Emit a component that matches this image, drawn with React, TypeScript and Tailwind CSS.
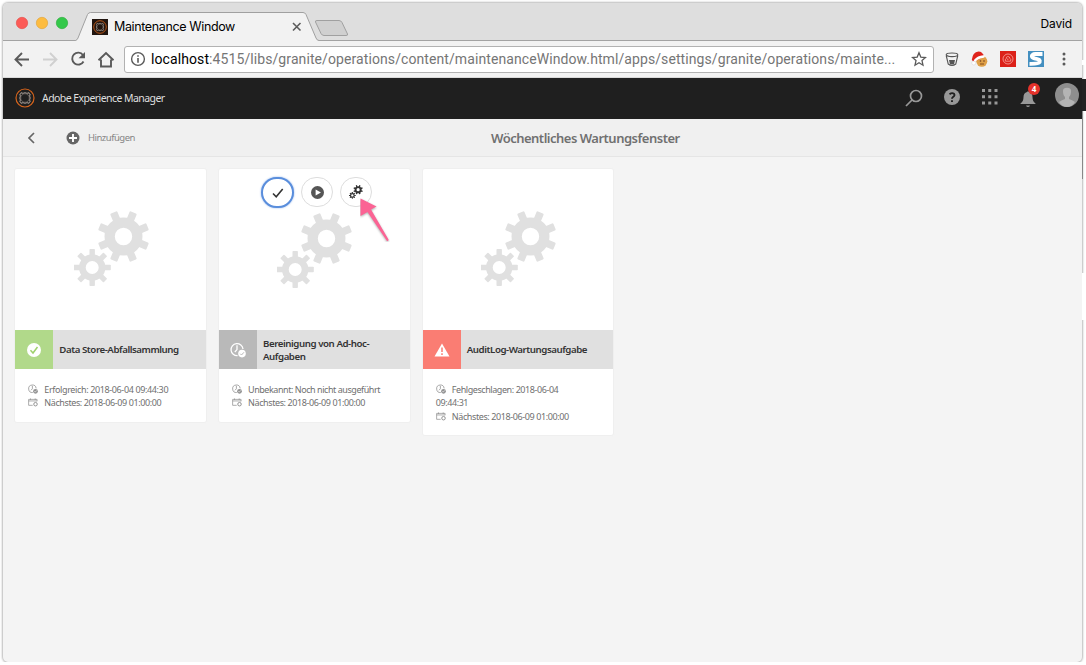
import React from 'react';

const NOTO = "font-['Noto_Sans',sans-serif]";

function gearPath(cx: number, cy: number, outer: number, body: number, hole: number, toothW: number, start: number) {
  const teeth = Array.from({ length: 8 }, (_, i) => start + i * 45);
  return (
    <g>
      {teeth.map((a) => (
        <rect key={a} x={cx - toothW / 2} y={cy - outer} width={toothW} height={outer - body + 3} rx={toothW * 0.15} transform={`rotate(${a} ${cx} ${cy})`} fill="currentColor" />
      ))}
      <circle cx={cx} cy={cy} r={(body + hole) / 2} fill="none" stroke="currentColor" strokeWidth={body - hole} />
    </g>
  );
}

function Gears({ className }: { className: string }) {
  return (
    <svg viewBox="0 0 76 76" className={className}>
      {gearPath(49.5, 25.5, 26, 19, 8.7, 7.6, 22.5)}
      {gearPath(18.2, 56.5, 18.6, 13.2, 6.5, 5.4, 0)}
    </svg>
  );
}

function Emblem({ className }: { className: string }) {
  return (
    <svg viewBox="0 0 20 20" className={className} fill="none">
      <circle cx="10" cy="10" r="9" stroke="#d6641c" strokeWidth="1.2" />
      <path d="M6 4.7Q8 6 10 4.700Q12 6 14 4.700Q13.700 6 15.200 6.200Q14 8 15.200 10Q14 12 15.200 13.800Q14 14 14 15.300Q12 14 10 15.300Q8 14 6 15.300Q6 14 4.800 13.800Q6 12 4.800 10Q6 8 4.800 6.200Q6.200 6 6 4.700Z" stroke="#b5aaa3" strokeWidth=".9" />
      <circle cx="10" cy="10" r="4.3" stroke="#8b817b" strokeWidth=".6" />
    </svg>
  );
}

function ClockIcon({ className }: { className: string }) {
  return (
    <svg viewBox="0 0 16 16" className={className} fill="none" stroke="currentColor">
      <path d="M7.6 13.6A6 6 0 1 1 13 7M7 3.2V7.6L4.8 10" strokeWidth="1.3" />
      <circle cx="12" cy="11.6" r="3.8" fill="currentColor" stroke="none" />
      <path d="m10.2 11.7 1.3 1.3 2.4-2.7" stroke="#fff" strokeWidth="1" />
    </svg>
  );
}

function CalendarIcon() {
  return (
    <svg viewBox="0 0 16 14" className="inline-block h-[9px] w-[10px] text-[#929292]" fill="none" stroke="currentColor" strokeWidth="1.2">
      <path d="M7.5 11.5H1V2H14.5V5M1 4.5H14.5M4 .5V3M11.5 .5V3" />
      <circle cx="12" cy="9.7" r="2.8" strokeWidth="1.6" />
    </svg>
  );
}

function Info({ children, calendar = false, ls = 'tracking-[-0.370px]' }: { children: React.ReactNode; calendar?: boolean; ls?: string }) {
  return (
    <p className={ls}>
      <span className="mr-[6px] inline-flex h-[10px] w-[10px] items-center align-[-1px]">
        {calendar ? <CalendarIcon /> : <ClockIcon className="h-[10px] w-[10px] text-[#929292]" />}
      </span>
      {children}
    </p>
  );
}

function Card({ tint, icon, title, children, actions, height, shift }: {
  tint: string; icon: React.ReactNode; title: React.ReactNode; children: React.ReactNode; actions?: React.ReactNode; height: string; shift: string;
}) {
  return (
    <article className={`relative flex w-[190.500px] shrink-0 flex-col rounded-[2px] bg-white shadow-[0_0_1px_1px_#efefef] ${height}`}>
      <div className={`h-[161px] shrink-0 ${shift}`}>
        <Gears className="h-[76px] w-[76px] text-[#e0e0e0]" />
      </div>
      {actions}
      <div className="flex h-[39px] shrink-0 bg-[#e0e0e0]">
        <div className={`flex w-[38px] shrink-0 items-center justify-center text-white ${tint}`}>{icon}</div>
        <h2 className="flex flex-1 items-center whitespace-nowrap pl-[6px] text-[9.700px] font-semibold leading-[13px] tracking-[-0.440px] text-[#333]">{title}</h2>
      </div>
      <div className="whitespace-nowrap pl-[13px] pt-[13.500px] text-[9px] leading-[13.500px] text-[#707070]">{children}</div>
    </article>
  );
}

function BrowserTop() {
  return (
    <div className="relative h-[38px] shrink-0 border-b border-[#a3a3a3] bg-[#dedede]">
      <svg className="absolute left-0 top-0 h-[38px] w-[360px]" viewBox="0 0 360 38">
        <circle cx="19" cy="20" r="5.7" fill="#fc5b57" stroke="#e24842" strokeWidth=".6" />
        <circle cx="39" cy="20" r="5.7" fill="#fdbc40" stroke="#dfa033" strokeWidth=".6" />
        <circle cx="59" cy="20" r="5.7" fill="#34c84a" stroke="#27aa35" strokeWidth=".6" />
        <path d="M72.5 38L73 37.3Q74.300 37 75 35L84.500 11.500Q85.500 9.500 87.500 9.500H300Q302 9.500 303 11.500L313 35Q314 37.500 316 37.500V38Z" fill="#f2f2f2" />
        <path d="M72.500 37.500Q74.300 37 75 35L84.500 11.500Q85.500 9.500 87.500 9.500H300Q302 9.500 303 11.500L313 35Q314 37.500 316 37.500" fill="none" stroke="#a0a0a0" />
        <path d="M314 17.500H336Q338 17.500 339 19.500L344.500 31Q345 32.500 343 32.500H321Q319 32.500 318 30.500L312.500 19Q312 17.500 314 17.500Z" fill="#d0d0d0" stroke="#a0a0a0" />
        <path d="M290 20L297.500 27.500M297.500 20L290 27.500" stroke="#5c5c5c" strokeWidth="1.600" />
      </svg>
      <div className="relative flex h-full items-start pl-[89px] pt-4">
        <div className="h-4 w-4 bg-[#21150f] p-px"><Emblem className="h-[14px] w-[14px]" /></div>
        <span className="ml-[6px] text-[12.500px] leading-4 tracking-[-0.370px] text-black">Maintenance Window</span>
        <span className="ml-auto mr-[10px] mt-[-3px] text-[12px] leading-4 tracking-[-0.150px] text-black">David</span>
      </div>
    </div>
  );
}

function Toolbar() {
  return (
    <div className="flex h-[37px] shrink-0 items-center border-b border-[#dadada] bg-[#f2f2f2]">
      <svg viewBox="0 0 121 37" className="h-[37px] w-[121px] shrink-0" fill="none" stroke="#5a5a5a" strokeWidth="1.900">
        <path d="M26 18.500H13M19 12L12.500 18.500L19 25" />
        <path d="M40 18.500H53M47 12L53.500 18.500L47 25" stroke="#d0d0d0" />
        <path d="M80 14A6 6 0 1 0 80.500 20.500" />
        <path d="M82 11V17.300H75.500Z" fill="#5a5a5a" stroke="none" />
        <path d="M95.500 19.300L103 12L110.500 19.300M98 18.500V25.500H108V18.500" />
      </svg>
      <div className="flex h-[27px] w-[810px] shrink-0 items-center rounded-[3px] border border-[#b2b2b2] bg-white">
        <svg viewBox="0 0 16 16" className="ml-[5px] h-4 w-4 shrink-0" fill="none" stroke="#5a5a5a">
          <circle cx="8" cy="8" r="6.400" strokeWidth="1.400" /><path d="M8 7V11.700M8 4.200V5.800" strokeWidth="1.600" />
        </svg>
        <span className="ml-[5px] w-[760px] shrink-0 whitespace-nowrap font-[Roboto,sans-serif] text-[14px] tracking-[0.090px] text-[#757575]"><span className="text-black">localhost</span>:4515/libs/granite/operations/content/maintenanceWindow.html/apps/settings/granite/operations/mainte...</span>
        <svg viewBox="0 0 16 16" className="h-4 w-4 shrink-0" fill="none" stroke="#5a5a5a" strokeWidth="1.300">
          <path d="M8 1.800L9.800 6.100L14.500 6.500L11 9.600L12 14.200L8 11.800L4 14.200L5 9.600L1.500 6.500L6.200 6.100Z" />
        </svg>
      </div>
      <svg viewBox="0 0 16 16" className="ml-[10px] h-4 w-4" fill="none" stroke="#555">
        <ellipse cx="8" cy="3.800" rx="5.800" ry="1.800" strokeWidth="1.100" /><path d="M2.200 4.500L4.200 13Q8 16 11.800 13L13.800 4.500" strokeWidth="1.100" /><path d="M5 9H11L10 13.500H6Z" fill="#555" stroke="none" />
      </svg>
      <svg viewBox="0 0 17 17" className="ml-[11px] h-[17px] w-[17px]">
        <circle cx="10.800" cy="10.300" r="5.500" fill="#dfa048" /><circle cx="9.500" cy="10" r=".8" fill="#704020" /><circle cx="13" cy="10" r=".8" fill="#704020" /><path d="M9 13H13" stroke="#86501e" />
        <path d="M.8 9Q1.500 1 7.500 .5Q11.500 .5 13 5.500L3 11Z" fill="#df231c" /><path d="M4 9.500Q7 6 12.500 5.500" stroke="#fff" strokeWidth="2.300" strokeLinecap="round" fill="none" /><circle cx="2.800" cy="12" r="2" fill="#fff" stroke="#ccc" strokeWidth=".4" />
      </svg>
      <svg viewBox="0 0 16 16" className="ml-[12px] h-4 w-4"><path fill="#dc2119" d="M0 0H16V16H0Z" /><g fill="none" stroke="#f8aaa4"><circle cx="8" cy="8" r="5" strokeWidth=".8" /><path d="M5.500 10.200H10.500Q11.500 8.500 10 7.500Q9.700 5.500 7.800 5.500Q6 5.800 6.200 7.800Q4.500 8.500 5.500 10.200ZM7.800 7.500V9" strokeWidth=".8" /></g></svg>
      <svg viewBox="0 0 16 16" className="ml-[12px] h-4 w-4"><path fill="#438fc0" d="M0 0H16V16H0Z" /><path d="M14.500 3H7.500Q3.500 3.300 3.800 5.400Q4.500 7.500 8.500 7.800Q12.500 8.500 11.700 11Q10.500 13 1.500 12.800" stroke="#fff" strokeWidth="3.800" fill="none" /></svg>
      <svg viewBox="0 0 4 14" className="ml-[18px] h-[14px] w-1" fill="#5a5a5a"><circle cx="2" cy="2" r="1.500" /><circle cx="2" cy="7" r="1.500" /><circle cx="2" cy="12" r="1.500" /></svg>
    </div>
  );
}

function AppHeader() {
  return (
    <header className="flex h-[41px] shrink-0 items-center bg-[#1f1f1f] pl-3 text-[#989898]">
      <Emblem className="mb-px h-5 w-5" />
      <span className={`ml-[7px] pt-px text-[10.500px] tracking-[-0.560px] text-[#dfdfdf] ${NOTO}`}>Adobe Experience Manager</span>
      <svg viewBox="0 0 18 18" className="mb-[2px] ml-auto h-[18px] w-[18px]" fill="none" stroke="currentColor" strokeWidth="1.700"><circle cx="11" cy="7" r="5.500" /><path d="M7 11L1 17" /></svg>
      <svg viewBox="0 0 16 16" className="mb-[3px] ml-[21px] h-4 w-4"><circle cx="8" cy="8" r="8" fill="currentColor" /><path d="M5.500 5.200Q8 3.300 10 4.700Q11.300 6.500 9 8Q8 8.700 8 9.800M8 11.300V13" fill="none" stroke="#1f1f1f" strokeWidth="1.900" /></svg>
      <svg viewBox="0 0 16 16" className="mb-1 ml-[22px] h-4 w-4" fill="currentColor">{[0, 6.250, 12.500].map((x) => [0, 6.250, 12.500].map((y) => <rect key={`${x}-${y}`} x={x} y={y} width="3" height="3" />))}</svg>
      <div className="relative ml-[22px] h-[18px] w-4">
        <svg viewBox="0 0 16 18" className="h-[18px] w-4" fill="currentColor"><path d="M7 2Q8 .5 9 2Q12.500 3 12.500 7Q12.500 11.500 15.500 13.500V14H.5V13.500Q3.500 11.500 3.500 7Q3.500 3 7 2ZM6 15.500H10Q9.500 17 8 17T6 15.500Z" /></svg>
        <span className={`absolute left-2 top-[-7px] flex h-3 w-3 items-center justify-center rounded-full bg-[#e4322b] text-[8px] font-bold leading-3 text-white ${NOTO}`}>4</span>
      </div>
      <svg viewBox="0 0 24 24" className="mb-[7px] ml-[19px] mr-[3px] h-6 w-6"><circle cx="12" cy="12" r="12" fill="#8e8e8e" /><path d="M8 8Q8 4.800 12 4.800T16 8Q16 12.500 14 14V16Q17 17 20 19Q17 24 12 24T4 19Q7 17 10 16V14Q8 12.500 8 8Z" fill="#b4b4b4" /></svg>
    </header>
  );
}

function Actions() {
  return (
    <div className="absolute left-[42px] top-[8px] flex text-[#333]">
      <div className="flex h-[31px] w-[33px] items-center justify-center rounded-full border-2 border-[#5a8edc] bg-white shadow-[0_0_2px_#8db1ea]"><svg viewBox="0 0 12 10" className="h-[10px] w-3" fill="none" stroke="currentColor" strokeWidth="1.600"><path d="M1 5.500L4.200 8.700L10.700 1" /></svg></div>
      <div className="ml-[7px] flex h-[30px] w-8 items-center justify-center rounded-full border border-[#ddd] bg-white"><svg viewBox="0 0 14 14" className="mt-px h-[13px] w-[13px]"><circle cx="7" cy="7" r="7" fill="#555" /><path d="M5 3.700V10.300L10.700 7Z" fill="#fff" /></svg></div>
      <div className="ml-[7px] flex h-[30px] w-8 items-center justify-center rounded-full border border-[#ddd] bg-white"><Gears className="h-[14px] w-[14px]" /></div>
      <svg viewBox="0 0 30 44" className="absolute left-[98.500px] top-[21px] h-[44px] w-[30px]"><path d="M.5 .500L16.500 8.500L11 11.500L28.500 41.500Q28.500 43.500 27 43L7.500 14L.5 18Z" fill="#fb6394" className="drop-shadow-[0_1px_1px_#aaa]" /></svg>
    </div>
  );
}

export default function App() {
  return (
    <div className="h-[662px] w-[1086px] overflow-hidden bg-white pl-[3px] pt-[3px] font-[Inter,sans-serif]">
      <div className="flex">
        <main className="flex h-[659px] w-[1079px] shrink-0 flex-col overflow-hidden rounded-[5px] bg-[#f4f4f4] shadow-[0_0_2px_1px_#bcbcbc]">
          <BrowserTop />
          <Toolbar />
          <AppHeader />
          <div className={`flex h-[38px] shrink-0 items-center border-b border-[#e5e5e5] bg-[#f0f0f0] text-[#666] ${NOTO}`}>
            <svg viewBox="0 0 8 12" className="ml-6 h-3 w-2" fill="none" stroke="currentColor" strokeWidth="1.700"><path d="M7 1L2 6L7 11" /></svg>
            <svg viewBox="0 0 14 14" className="ml-[31px] h-[14px] w-[14px]"><circle cx="7" cy="7" r="6.500" fill="currentColor" /><path d="M7 3V11M3 7H11" stroke="#fff" strokeWidth="1.900" /></svg>
            <span className="ml-2 w-[403px] pt-[2px] text-[9.500px] tracking-[-0.500px] text-[#858585]">Hinzufügen</span>
            <h1 className="whitespace-nowrap pt-[2px] text-[13px] font-semibold tracking-[-0.500px] text-[#707070]">Wöchentliches Wartungsfenster</h1>
          </div>
          <section className={`flex items-start gap-[13.250px] pl-[12.300px] pt-[12px] ${NOTO}`}>
            <Card height="h-[253px]" shift="pl-[58.500px] pt-[42px]" tint="bg-[#b1d98a]" icon={<svg viewBox="0 0 14 14" className="h-[14px] w-[14px]"><circle cx="7" cy="7" r="7" fill="#fff" /><path d="M3.500 7.300L6 10L10.500 4" fill="none" stroke="#9ed06b" strokeWidth="1.500" /></svg>} title="Data Store-Abfallsammlung">
              <Info>Erfolgreich: 2018-06-04 09:44:30</Info>
              <Info calendar ls="tracking-[-0.400px]">Nächstes: 2018-06-09 01:00:00</Info>
            </Card>
            <Card height="h-[253px]" shift="pl-[58px] pt-[44px]" tint="bg-[#b9b9b9]" icon={<ClockIcon className="h-4 w-4 text-white [&>path:last-child]:stroke-[#b9b9b9]" />} title={<span>Bereinigung von Ad-hoc-<br />Aufgaben</span>} actions={<Actions />}>
              <Info ls="tracking-[-0.450px]">Unbekannt: Noch nicht ausgeführt</Info>
              <Info calendar ls="tracking-[-0.400px]">Nächstes: 2018-06-09 01:00:00</Info>
            </Card>
            <Card height="h-[266px]" shift="pl-[58px] pt-[42px]" tint="bg-[#fa7d73]" icon={<svg viewBox="0 0 16 14" className="h-[14px] w-4"><path d="M8 .5L15.500 13.500H.5Z" fill="#fff" /><path d="M8 4.500V9M8 10.300V12" stroke="#fa7d73" strokeWidth="1.500" /></svg>} title="AuditLog-Wartungsaufgabe">
              <Info ls="tracking-[-0.430px]">Fehlgeschlagen: 2018-06-04<br />09:44:31</Info>
              <Info calendar ls="tracking-[-0.400px]">Nächstes: 2018-06-09 01:00:00</Info>
            </Card>
          </section>
        </main>
        <aside className="relative flex h-[658px] w-1 shrink-0 flex-col">
          <div className="mt-[57px] h-[5px] bg-white" />
          <div className="mt-[14px] h-[32px] bg-[#222]" />
          <div className="h-[68px] w-px bg-[#888]" />
          <div className="mt-[94px] h-[47px] bg-white" />
        </aside>
      </div>
    </div>
  );
}
